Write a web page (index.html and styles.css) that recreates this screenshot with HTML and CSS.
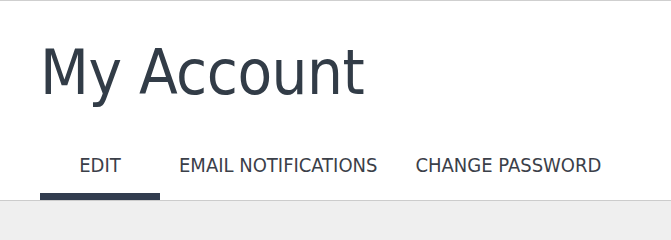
FILE: index.html
```html
<!DOCTYPE html>
<html>
<head>
<meta charset="utf-8">
<link rel="stylesheet" href="styles.css">
</head>
<body>
<header class="account-header">
  <h1 class="page-title">My Account</h1>
  <nav class="tabs">
    <a class="tab active" href="#">EDIT</a>
    <a class="tab" href="#">EMAIL NOTIFICATIONS</a>
    <a class="tab" href="#">CHANGE PASSWORD</a>
  </nav>
</header>
</body>
</html>
```
FILE: styles.css
```css
html {
  background: #efefef;
}
body {
  margin: 0;
  padding: 0;
  font-family: "DejaVu Sans Condensed", "DejaVu Sans", sans-serif;
  border-top: 1px solid #cfcfcf;
}
.account-header {
  background: #ffffff;
  padding: 40px 0 0 40px;
  border-bottom: 1px solid #cccccc;
}
.page-title {
  margin: 0;
  font-size: 63px;
  line-height: 63px;
  font-weight: normal;
  letter-spacing: -0.5px;
  color: #323c47;
}
.tabs {
  display: flex;
  margin-top: 51px;
}
.tab {
  display: block;
  min-width: 120px;
  box-sizing: border-box;
  padding: 0 19px 18px;
  font-size: 20px;
  line-height: 20px;
  text-align: center;
  text-decoration: none;
  color: #3b4049;
  border-bottom: 7px solid transparent;
}
.tab.active {
  border-bottom-color: #323c4f;
}
```
